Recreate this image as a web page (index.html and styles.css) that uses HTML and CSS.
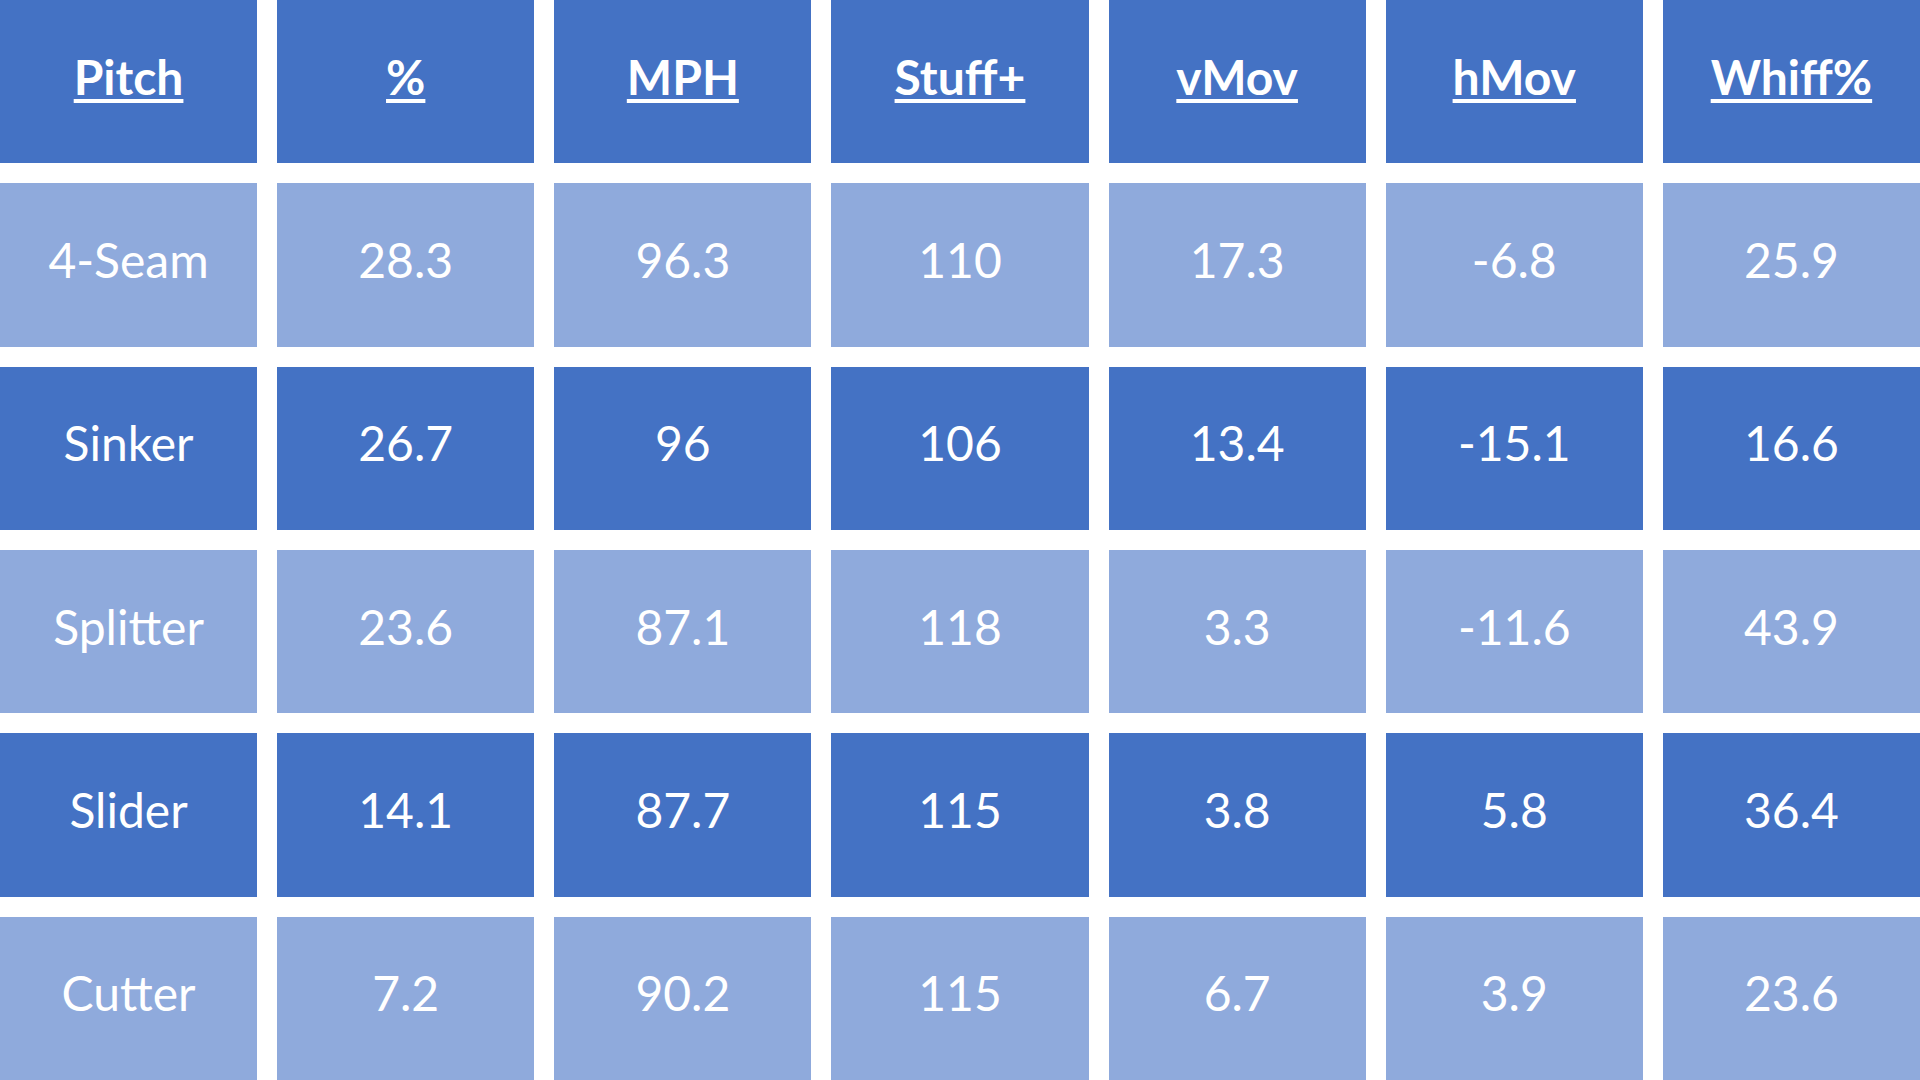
FILE: index.html
```html
<!DOCTYPE html>
<html lang="en">
<head>
    <meta charset="UTF-8">
    <meta name="viewport" content="width=device-width, initial-scale=1.0">
    <title>Pitch Arsenal</title>
    <link rel="stylesheet" href="styles.css">
</head>
<body>
    <div class="pitch-table">
        <div class="row header dark">
            <div class="cell"><span>Pitch</span></div>
            <div class="cell"><span>%</span></div>
            <div class="cell"><span>MPH</span></div>
            <div class="cell"><span>Stuff+</span></div>
            <div class="cell"><span>vMov</span></div>
            <div class="cell"><span>hMov</span></div>
            <div class="cell"><span>Whiff%</span></div>
        </div>
        <div class="row light">
            <div class="cell">4-Seam</div>
            <div class="cell">28.3</div>
            <div class="cell">96.3</div>
            <div class="cell">110</div>
            <div class="cell">17.3</div>
            <div class="cell">-6.8</div>
            <div class="cell">25.9</div>
        </div>
        <div class="row dark">
            <div class="cell">Sinker</div>
            <div class="cell">26.7</div>
            <div class="cell">96</div>
            <div class="cell">106</div>
            <div class="cell">13.4</div>
            <div class="cell">-15.1</div>
            <div class="cell">16.6</div>
        </div>
        <div class="row light">
            <div class="cell">Splitter</div>
            <div class="cell">23.6</div>
            <div class="cell">87.1</div>
            <div class="cell">118</div>
            <div class="cell">3.3</div>
            <div class="cell">-11.6</div>
            <div class="cell">43.9</div>
        </div>
        <div class="row dark">
            <div class="cell">Slider</div>
            <div class="cell">14.1</div>
            <div class="cell">87.7</div>
            <div class="cell">115</div>
            <div class="cell">3.8</div>
            <div class="cell">5.8</div>
            <div class="cell">36.4</div>
        </div>
        <div class="row light">
            <div class="cell">Cutter</div>
            <div class="cell">7.2</div>
            <div class="cell">90.2</div>
            <div class="cell">115</div>
            <div class="cell">6.7</div>
            <div class="cell">3.9</div>
            <div class="cell">23.6</div>
        </div>
    </div>
</body>
</html>
```

FILE: styles.css
```css
body {
    margin: 0;
    background-color: white;
    font-family: Lato, "Open Sans", sans-serif;
}
.pitch-table {
    display: grid;
    grid-template-columns: repeat(7, 1fr);
    grid-template-rows: repeat(6, 1fr);
    gap: 20px;
    height: 100vh;
}
.row {
    display: contents;
}
.cell {
    display: flex;
    align-items: center;
    justify-content: center;
    padding-bottom: 11px;
    color: white;
    font-size: 48px;
}
.dark .cell {
    background-color: #4472C4;
}
.light .cell {
    background-color: #8FAADC;
}
.header .cell {
    font-weight: bold;
}
.header .cell span {
    text-decoration: underline;
    text-decoration-thickness: 4px;
    text-underline-offset: 4px;
}
```
